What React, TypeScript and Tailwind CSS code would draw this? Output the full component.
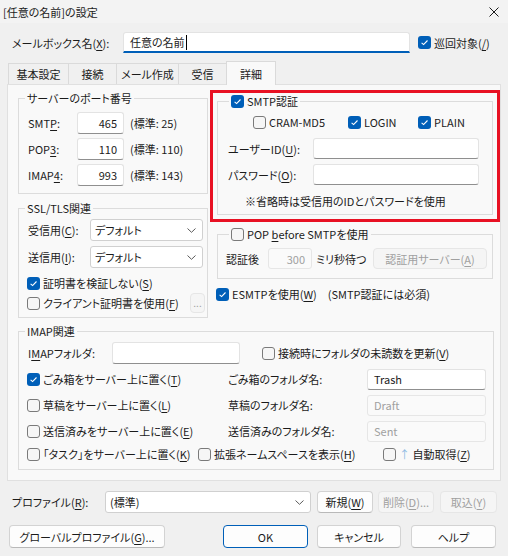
import React from 'react';

type Kids = { children?: React.ReactNode; className?: string };

function U({ children }: Kids) {
  return <span className="underline underline-offset-[2px] decoration-1">{children}</span>;
}

function Check({ checked }: { checked?: boolean }) {
  if (checked) {
    return (
      <span className="flex h-[13px] w-[13px] shrink-0 items-center justify-center rounded-[3px] bg-[#005fb8]">
        <svg width="9" height="9" viewBox="0 0 9 9">
          <path d="M1.6 4.8 3.6 6.6 7.5 2.5" fill="none" stroke="#fff" strokeWidth="1.1" />
        </svg>
      </span>
    );
  }
  return <span className="h-[13px] w-[13px] shrink-0 rounded-[3px] border border-[#7a7a7a] bg-[#f6f6f6]" />;
}

function CheckItem({ checked, children, className = '' }: Kids & { checked?: boolean }) {
  return (
    <span className={`flex items-center gap-[3px] whitespace-nowrap ${className}`}>
      <Check checked={checked} />
      <span>{children}</span>
    </span>
  );
}

function Field({ children, className = '', disabled }: Kids & { disabled?: boolean }) {
  return (
    <div
      className={`flex shrink-0 items-center rounded-[3px] border px-[6px] whitespace-nowrap ${
        disabled ? 'border-[#e6e6e6] bg-[#fafafa] text-[#a0a0a0]' : 'border-[#e3e3e3] border-b-[#8f8f8f] bg-white'
      } ${className}`}
    >
      {children}
    </div>
  );
}

function Combo({ children, className = '' }: Kids) {
  return (
    <div className={`flex shrink-0 items-center justify-between rounded-[3px] border border-[#d0d0d0] bg-white pl-[4px] pr-[6px] ${className}`}>
      <span className="whitespace-nowrap">{children}</span>
      <svg width="9" height="5" viewBox="0 0 9 5">
        <path d="M0.5 0.5 4.5 4.3 8.5 0.5" fill="none" stroke="#5a5a5a" strokeWidth="1" />
      </svg>
    </div>
  );
}

function Btn({ children, className = '', disabled, primary }: Kids & { disabled?: boolean; primary?: boolean }) {
  let look = 'border-[#d3d3d3] border-b-[#b9b9b9] bg-[#fdfdfd]';
  if (disabled) look = 'border-[#e6e6e6] bg-[#f5f5f5] text-[#a0a0a0]';
  if (primary) look = 'border-[#005fb8] bg-[#fdfdfd]';
  return (
    <div className={`flex shrink-0 items-center justify-center rounded-[4px] border whitespace-nowrap ${look} ${className}`}>
      {children}
    </div>
  );
}

const tabs = [
  { label: '基本設定', w: 'w-[60px]' },
  { label: '接続', w: 'w-[48px]' },
  { label: 'メール作成', w: 'w-[62px]' },
  { label: '受信', w: 'w-[48px]' },
];

export default function App() {
  return (
    <div className="h-[556px] w-[508px] overflow-hidden bg-[#f0f0f0] font-['Noto_Sans_CJK_JP','Noto_Sans',sans-serif] text-[11px] leading-[16px] text-[#1b1b1b] [font-feature-settings:'palt']">
      {/* title bar */}
      <div className="flex h-[23px] items-center justify-between bg-[#f3f3f3] pl-[3px] pr-[9px]">
        <span>[任意の名前]の設定</span>
        <svg width="10" height="10" viewBox="0 0 10 10">
          <path d="M0.5 0.5 9.5 9.5M9.5 0.5 0.5 9.5" stroke="#1b1b1b" strokeWidth="1" />
        </svg>
      </div>

      {/* mailbox name */}
      <div className="mt-[9px] flex h-[21px] items-center pl-[12px]">
        <span className="w-[111px] whitespace-nowrap">
          メールボックス名(<U>X</U>):
        </span>
        <div className="flex h-[21px] w-[287px] items-center rounded-t-[3px] border border-[#e3e3e3] border-b-2 border-b-[#005fb8] bg-white pl-[6px]">
          任意の名前
          <span className="ml-[1px] h-[15px] w-px bg-black" />
        </div>
        <CheckItem checked className="ml-[8px]">
          巡回対象(<U>/</U>)
        </CheckItem>
      </div>

      {/* tabs */}
      <div className="mt-[8px] flex h-[23px] items-end pl-[8px]">
        {tabs.map((t) => (
          <div key={t.label} className={`flex h-[21px] items-center justify-center border-l border-t border-[#dadada] bg-[#f0f0f0] ${t.w}`}>
            {t.label}
          </div>
        ))}
        <div className="relative z-10 -mb-px flex h-[24px] w-[50px] items-center justify-center border border-b-0 border-[#dadada] bg-[#f9f9f9]">
          詳細
        </div>
      </div>

      {/* tab panel */}
      <div className="ml-[7px] h-[397px] w-[494px] border border-[#e0e0e0] bg-[#f9f9f9] pl-[10px] pt-[5px]">
        <div className="flex items-start">
          {/* left column */}
          <div className="w-[190px]">
            <fieldset className="border border-[#dcdcdc]">
              <legend className="ml-[6px] px-[2px]">サーバーのポート番号</legend>
              <div className="mt-[6px] flex flex-col gap-[4px] pb-[7px] pl-[9px]">
                {[
                  { l: <>SMT<U>P</U>:</>, v: '465', s: '(標準: 25)' },
                  { l: <>POP<U>3</U>:</>, v: '110', s: '(標準: 110)' },
                  { l: <>IMAP<U>4</U>:</>, v: '993', s: '(標準: 143)' },
                ].map((r, i) => (
                  <div key={i} className="flex h-[22px] items-center">
                    <span className="w-[49px]">{r.l}</span>
                    <Field className="h-[22px] w-[47px] justify-end">{r.v}</Field>
                    <span className="ml-[6px] whitespace-nowrap">{r.s}</span>
                  </div>
                ))}
              </div>
            </fieldset>

            <fieldset className="mt-[6px] border border-[#dcdcdc]">
              <legend className="ml-[6px] px-[2px]">SSL/TLS関連</legend>
              <div className="pb-[4px] pl-[9px] pr-[2px]">
                <div className="mt-[3px] flex h-[22px] items-center">
                  <span className="w-[62px]">
                    受信用(<U>C</U>):
                  </span>
                  <Combo className="h-[22px] w-[113px]">デフォルト</Combo>
                </div>
                <div className="mt-[5px] flex h-[22px] items-center">
                  <span className="w-[62px]">
                    送信用(<U>I</U>):
                  </span>
                  <Combo className="h-[22px] w-[113px]">デフォルト</Combo>
                </div>
                <div className="mt-[5px] flex h-[20px] items-center">
                  <CheckItem checked className="-ml-px">
                    証明書を検証しない(<U>S</U>)
                  </CheckItem>
                </div>
                <div className="flex h-[20px] items-center justify-between">
                  <CheckItem className="-ml-px">
                    クライアント証明書を使用(<U>F</U>)
                  </CheckItem>
                  <Btn disabled className="h-[20px] w-[15px] text-[10px]">
                    ...
                  </Btn>
                </div>
              </div>
            </fieldset>
          </div>

          {/* right column */}
          <div className="ml-[2px] w-[290px]">
            <div className="h-[132px] border-[3px] border-[#e81123] px-[4px]">
              <fieldset className="h-[122px] border border-[#dcdcdc]">
                <legend className="ml-[11px] px-[2px]">
                  <CheckItem checked>SMTP認証</CheckItem>
                </legend>
                <div className="mt-[3px] flex h-[20px] items-center pl-[35px]">
                  <CheckItem className="w-[95px]">CRAM-MD5</CheckItem>
                  <CheckItem checked className="w-[70px]">
                    LOGIN
                  </CheckItem>
                  <CheckItem checked>PLAIN</CheckItem>
                </div>
                <div className="mt-[6px] flex items-center pl-[10px]">
                  <span className="w-[85px] whitespace-nowrap">
                    ユーザーID(<U>U</U>):
                  </span>
                  <Field className="h-[21px] w-[166px]" />
                </div>
                <div className="mt-[5px] flex items-center pl-[10px]">
                  <span className="w-[85px] whitespace-nowrap">
                    パスワード(<U>O</U>):
                  </span>
                  <Field className="h-[21px] w-[166px]" />
                </div>
                <div className="mt-[8px] pl-[27px]">※省略時は受信用のIDとパスワードを使用</div>
              </fieldset>
            </div>

            <fieldset className="ml-[7px] mt-[4px] w-[276px] border border-[#dcdcdc]">
              <legend className="ml-[11px] px-[2px]">
                <CheckItem>
                  POP <U>b</U>efore SMTPを使用
                </CheckItem>
              </legend>
              <div className="mt-[6px] flex items-center pb-[9px] pl-[8px]">
                <span className="w-[42px]">認証後</span>
                <Field disabled className="h-[21px] w-[44px] justify-end">
                  300
                </Field>
                <span className="ml-[4px] w-[57px]">ミリ秒待つ</span>
                <Btn disabled className="h-[21px] w-[114px]">
                  認証用サーバー(<U>A</U>)
                </Btn>
              </div>
            </fieldset>

            <div className="ml-[6px] mt-[5px] flex h-[20px] items-center">
              <CheckItem checked>
                ESMTPを使用(<U>W</U>)
              </CheckItem>
              <span className="ml-[11px]">(SMTP認証には必須)</span>
            </div>
          </div>
        </div>

        {/* IMAP */}
        <fieldset className="mt-[5px] w-[476px] border border-[#dcdcdc]">
          <legend className="ml-[6px] px-[2px]">IMAP関連</legend>
          <div className="pb-[5px] pl-[9px]">
            <div className="mt-[3px] flex h-[22px] items-center">
              <span className="w-[84px]">
                I<U>M</U>APフォルダ:
              </span>
              <Field className="h-[22px] w-[128px]" />
              <CheckItem className="ml-[22px]">
                接続時にフォルダの未読数を更新(<U>V</U>)
              </CheckItem>
            </div>
            {[
              { c: true, l: <>ごみ箱をサーバー上に置く(<U>T</U>)</>, n: 'ごみ箱のフォルダ名:', v: 'Trash', d: false },
              { c: false, l: <>草稿をサーバー上に置く(<U>L</U>)</>, n: '草稿のフォルダ名:', v: 'Draft', d: true },
              { c: false, l: <>送信済みをサーバー上に置く(<U>E</U>)</>, n: '送信済みのフォルダ名:', v: 'Sent', d: true },
            ].map((r, i) => (
              <div key={i} className="mt-[4px] flex h-[22px] items-center">
                <CheckItem checked={r.c} className="-ml-px w-[201px]">
                  {r.l}
                </CheckItem>
                <span className="w-[139px]">{r.n}</span>
                <Field disabled={r.d} className="h-[21px] w-[119px]">
                  {r.v}
                </Field>
              </div>
            ))}
            <div className="mt-[2px] flex h-[20px] items-center">
              <CheckItem className="-ml-px w-[171px]">
                「タスク」をサーバー上に置く(<U>K</U>)
              </CheckItem>
              <CheckItem className="w-[185px]">
                拡張ネームスペースを表示(<U>H</U>)
              </CheckItem>
              <CheckItem>
                <span className="text-[#8fbbe3]">↑</span> 自動取得(<U>Z</U>)
              </CheckItem>
            </div>
          </div>
        </fieldset>
      </div>

      {/* profile */}
      <div className="mt-[10px] flex h-[22px] items-center pl-[12px]">
        <span className="w-[93px]">
          プロファイル(<U>R</U>):
        </span>
        <Combo className="h-[22px] w-[206px]">(標準)</Combo>
        <Btn className="ml-[6px] h-[22px] w-[56px]">
          新規(<U>W</U>)
        </Btn>
        <Btn disabled className="ml-[5px] h-[22px] w-[56px]">
          削除(<U>D</U>)...
        </Btn>
        <Btn disabled className="ml-[6px] h-[22px] w-[57px]">
          取込(<U>Y</U>)
        </Btn>
      </div>

      {/* dialog buttons */}
      <div className="mt-[12px] flex pl-[9px]">
        <Btn className="h-[23px] w-[156px]">
          グローバルプロファイル(<U>G</U>)...
        </Btn>
        <Btn primary className="ml-[58px] h-[23px] w-[85px]">
          OK
        </Btn>
        <Btn className="ml-[9px] h-[23px] w-[84px]">キャンセル</Btn>
        <Btn className="ml-[10px] h-[23px] w-[85px]">ヘルプ</Btn>
      </div>
    </div>
  );
}
